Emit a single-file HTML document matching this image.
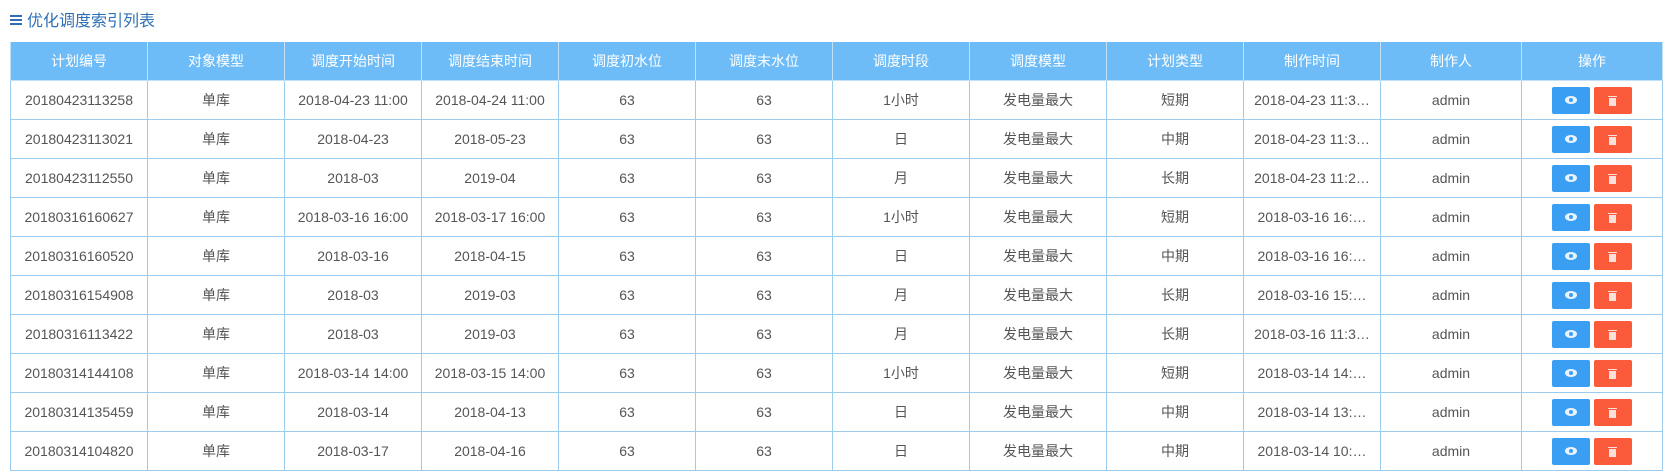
<!DOCTYPE html>
<html><head><meta charset="utf-8"><style>
body{margin:0;background:#fff;width:1669px;height:475px;overflow:hidden;font-family:"Liberation Sans","Noto Sans CJK SC",sans-serif;}
.title{position:absolute;left:10px;top:10px;font-size:16px;color:#2f6fb5;line-height:24px;}
.title .bars{display:inline-block;width:12px;height:10px;vertical-align:middle;margin-right:5px;margin-top:-3px;background:linear-gradient(#2f6fb5 0 2px,transparent 2px 4px,#2f6fb5 4px 6px,transparent 6px 8px,#2f6fb5 8px 10px);}
table{position:absolute;left:10px;top:42px;width:1652px;border-collapse:collapse;table-layout:fixed;font-size:14px;color:#555;}
th{background:#6ebcf7;color:#fff;font-weight:normal;height:38px;padding:0;line-height:20px;border:1px solid #c2e0f7;border-top:none;}
td{height:38px;padding:0;line-height:20px;border:1px solid #9ccbed;text-align:center;white-space:nowrap;overflow:hidden;}
.b{display:inline-block;width:38px;height:27px;vertical-align:middle;position:relative;border-radius:2px;}
.v{background:#3a9ff3;}
.d{background:#fb5a3b;margin-left:4px;}
.v::after{content:"";position:absolute;left:13px;top:9px;width:12px;height:8px;border-radius:50%;background:#e8f3fd;}
.v::before{content:"";position:absolute;left:17px;top:11px;width:4px;height:4px;border-radius:50%;background:#3a9ff3;z-index:1;}
.d::after{content:"";position:absolute;left:15px;top:11px;width:7px;height:8px;background:#fde0d9;}
.d::before{content:"";position:absolute;left:14px;top:9px;width:9px;height:1px;background:#fde0d9;}
</style></head><body>
<div class="title"><span class="bars"></span>优化调度索引列表</div>
<table>
<colgroup><col span="10" style="width:137px"><col style="width:141px"><col style="width:141px"></colgroup>
<tr><th>计划编号</th><th>对象模型</th><th>调度开始时间</th><th>调度结束时间</th><th>调度初水位</th><th>调度末水位</th><th>调度时段</th><th>调度模型</th><th>计划类型</th><th>制作时间</th><th>制作人</th><th>操作</th></tr>
<tr><td>20180423113258</td><td>单库</td><td>2018-04-23 11:00</td><td>2018-04-24 11:00</td><td>63</td><td>63</td><td>1小时</td><td>发电量最大</td><td>短期</td><td>2018-04-23 11:3…</td><td>admin</td><td><span class="b v"></span><span class="b d"></span></td></tr>
<tr><td>20180423113021</td><td>单库</td><td>2018-04-23</td><td>2018-05-23</td><td>63</td><td>63</td><td>日</td><td>发电量最大</td><td>中期</td><td>2018-04-23 11:3…</td><td>admin</td><td><span class="b v"></span><span class="b d"></span></td></tr>
<tr><td>20180423112550</td><td>单库</td><td>2018-03</td><td>2019-04</td><td>63</td><td>63</td><td>月</td><td>发电量最大</td><td>长期</td><td>2018-04-23 11:2…</td><td>admin</td><td><span class="b v"></span><span class="b d"></span></td></tr>
<tr><td>20180316160627</td><td>单库</td><td>2018-03-16 16:00</td><td>2018-03-17 16:00</td><td>63</td><td>63</td><td>1小时</td><td>发电量最大</td><td>短期</td><td>2018-03-16 16:…</td><td>admin</td><td><span class="b v"></span><span class="b d"></span></td></tr>
<tr><td>20180316160520</td><td>单库</td><td>2018-03-16</td><td>2018-04-15</td><td>63</td><td>63</td><td>日</td><td>发电量最大</td><td>中期</td><td>2018-03-16 16:…</td><td>admin</td><td><span class="b v"></span><span class="b d"></span></td></tr>
<tr><td>20180316154908</td><td>单库</td><td>2018-03</td><td>2019-03</td><td>63</td><td>63</td><td>月</td><td>发电量最大</td><td>长期</td><td>2018-03-16 15:…</td><td>admin</td><td><span class="b v"></span><span class="b d"></span></td></tr>
<tr><td>20180316113422</td><td>单库</td><td>2018-03</td><td>2019-03</td><td>63</td><td>63</td><td>月</td><td>发电量最大</td><td>长期</td><td>2018-03-16 11:3…</td><td>admin</td><td><span class="b v"></span><span class="b d"></span></td></tr>
<tr><td>20180314144108</td><td>单库</td><td>2018-03-14 14:00</td><td>2018-03-15 14:00</td><td>63</td><td>63</td><td>1小时</td><td>发电量最大</td><td>短期</td><td>2018-03-14 14:…</td><td>admin</td><td><span class="b v"></span><span class="b d"></span></td></tr>
<tr><td>20180314135459</td><td>单库</td><td>2018-03-14</td><td>2018-04-13</td><td>63</td><td>63</td><td>日</td><td>发电量最大</td><td>中期</td><td>2018-03-14 13:…</td><td>admin</td><td><span class="b v"></span><span class="b d"></span></td></tr>
<tr><td>20180314104820</td><td>单库</td><td>2018-03-17</td><td>2018-04-16</td><td>63</td><td>63</td><td>日</td><td>发电量最大</td><td>中期</td><td>2018-03-14 10:…</td><td>admin</td><td><span class="b v"></span><span class="b d"></span></td></tr>
</table>
</body></html>
